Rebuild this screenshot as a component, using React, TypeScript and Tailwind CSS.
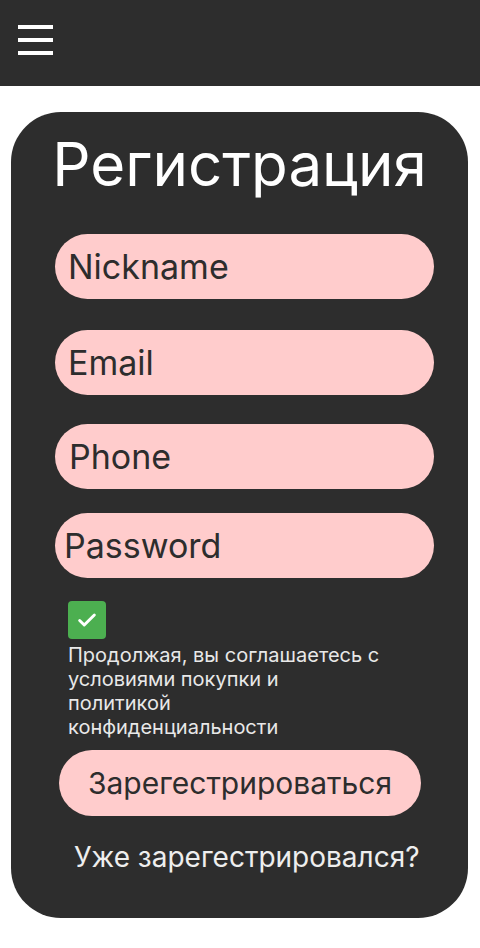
import { useState } from "react";

const FIELDS = [
  { id: "nickname", label: "Nickname", mt: "mt-[40px]", pl: "pl-[13px]" },
  { id: "email", label: "Email", mt: "mt-[31px]", pl: "pl-[13px]" },
  { id: "phone", label: "Phone", mt: "mt-[29px]", pl: "pl-[14px]" },
  { id: "password", label: "Password", mt: "mt-[24px]", pl: "pl-[9px]" },
];

function Burger() {
  return (
    <button type="button" className="flex flex-col gap-[9px] w-[35px]">
      <span className="block h-[4px] w-full bg-white"></span>
      <span className="block h-[4px] w-full bg-white"></span>
      <span className="block h-[4px] w-full bg-white"></span>
    </button>
  );
}

export default function App() {
  const [agree, setAgree] = useState(true);

  return (
    <div className="min-h-[948px] bg-white font-['Inter','Noto_Sans',sans-serif]">
      {/* Header */}
      <header className="h-[86px] bg-[#2d2d2d] flex items-start pt-[25px] pl-[18px]">
        <Burger />
      </header>

      {/* Card */}
      <div className="ml-[11px] mt-[26px] w-[457px] h-[806px] bg-[#2d2d2d] rounded-[50px] flex flex-col pt-[22px]">
        <h1 className="text-white text-[60px] leading-none text-center">Регистрация</h1>

        {FIELDS.map((f) => (
          <input
            key={f.id}
            type={f.id === "password" ? "password" : "text"}
            placeholder={f.label}
            className={`${f.mt} ml-[44px] w-[379px] h-[65px] rounded-full bg-[#ffcccc] ${f.pl} text-[34px] text-[#2d2d2d] placeholder:text-[#2d2d2d] outline-none`}
          />
        ))}

        <div className="ml-[57px] mt-[23px] flex flex-col">
          <button
            type="button"
            onClick={() => setAgree(!agree)}
            className={`w-[38px] h-[38px] rounded-[4px] flex items-center justify-center ${agree ? "bg-[#4caf50]" : "bg-gray-300"}`}
          >
            {agree && (
              <svg width="22" height="22" viewBox="0 0 24 24" fill="none" stroke="white" strokeWidth="3.2" strokeLinecap="round" strokeLinejoin="round">
                <path d="M4 12.5l5 5L20 6.5" />
              </svg>
            )}
          </button>
          <p className="mt-[4px] w-[314px] text-[20px] leading-[24px] text-[#e8e8e8]">
            Продолжая, вы соглашаетесь с условиями покупки и политикой конфиденциальности
          </p>
        </div>

        <button
          type="button"
          className="mt-[11px] ml-[48px] w-[362px] h-[66px] rounded-full bg-[#ffcccc] text-[30px] text-[#2d2d2d]"
        >
          Зарегестрироваться
        </button>

        <button type="button" className="mt-[20px] ml-[63px] text-left text-[28px] leading-[42px] text-[#eeeeee]">
          Уже зарегестрировался?
        </button>
      </div>
    </div>
  );
}
